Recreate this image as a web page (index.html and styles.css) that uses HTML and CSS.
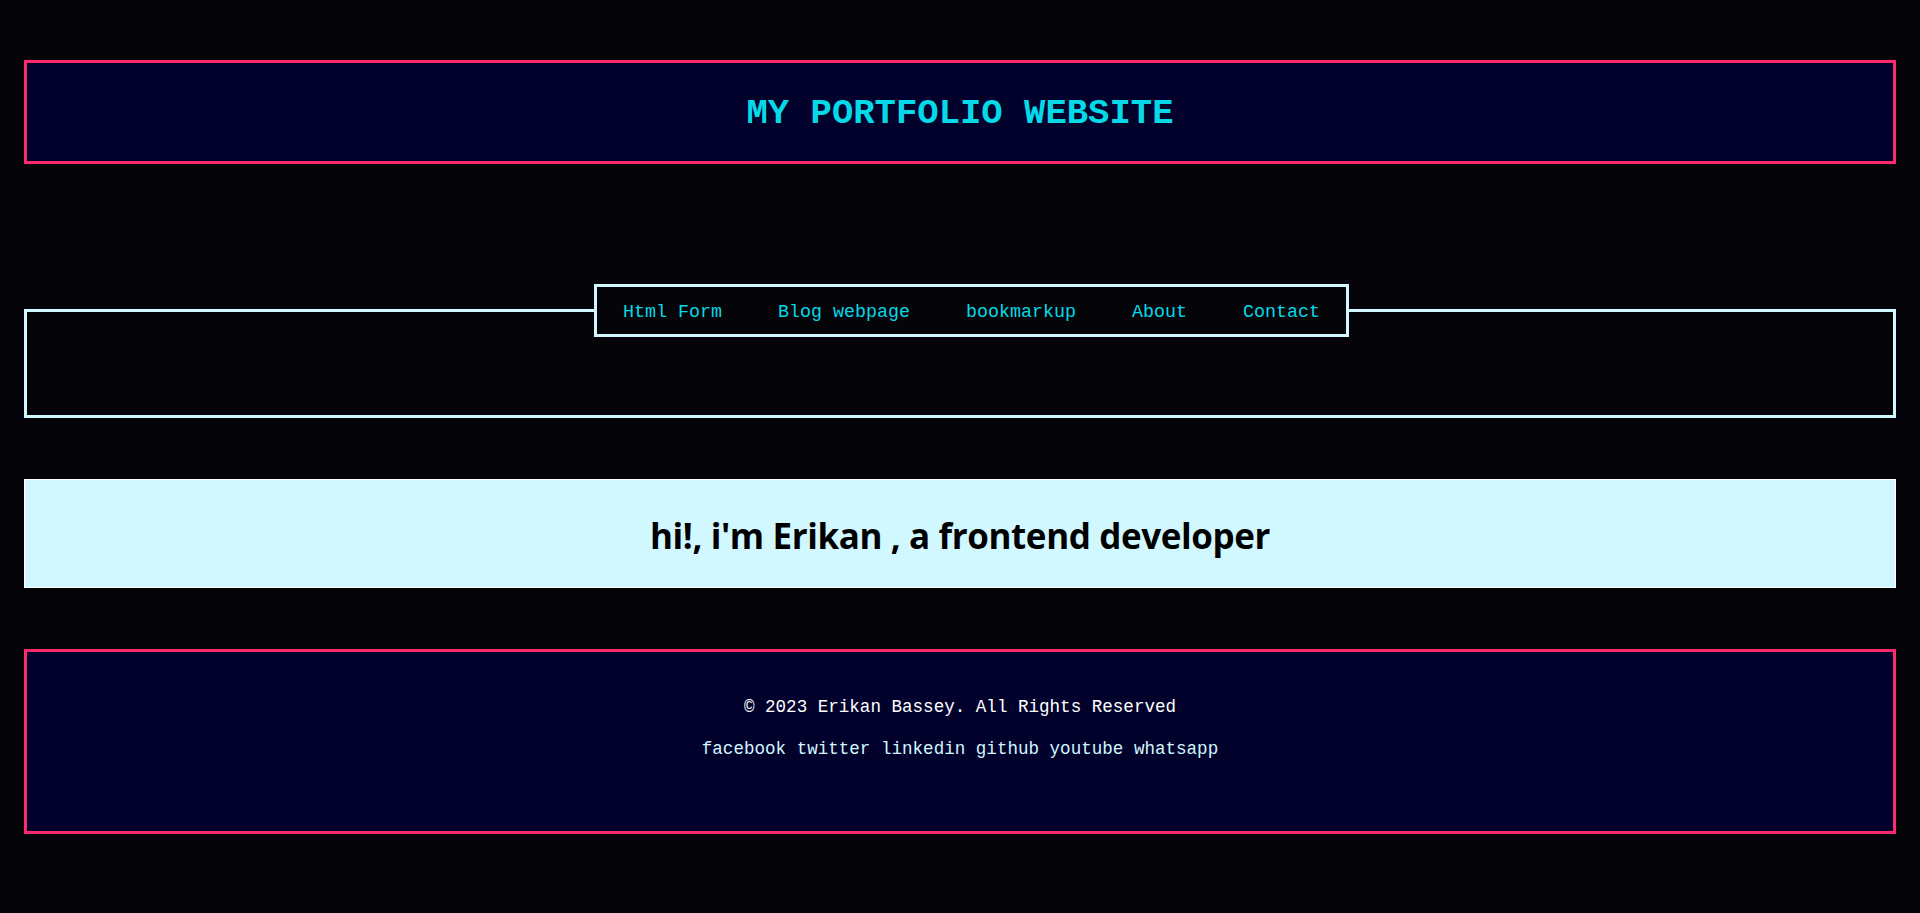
FILE: index.html
```html
<!DOCTYPE html>
<html lang="en">
<head>
<meta charset="utf-8">
<title>My Portfolio Website</title>
<link rel="stylesheet" href="styles.css">
</head>
<body>
<div class="page">
  <header class="site-header">
    <h1 class="site-title">MY PORTFOLIO WEBSITE</h1>
  </header>

  <fieldset class="nav-frame">
    <legend class="nav-legend">
      <ul class="nav-list">
        <li><a href="#" class="nav-link">Html Form</a></li>
        <li><a href="#" class="nav-link">Blog webpage</a></li>
        <li><a href="#" class="nav-link">bookmarkup</a></li>
        <li><a href="#" class="nav-link">About</a></li>
        <li><a href="#" class="nav-link">Contact</a></li>
      </ul>
    </legend>
  </fieldset>

  <section class="hero">
    <h2 class="hero-text">hi!, i'm Erikan , a frontend developer</h2>
  </section>

  <footer class="site-footer">
    <p class="copyright">&copy; 2023 Erikan Bassey. All Rights Reserved</p>
    <p class="socials">facebook twitter linkedin github youtube whatsapp</p>
  </footer>
</div>
</body>
</html>
```

FILE: styles.css
```css
html {
  background: #050409;
}

body {
  margin: 0;
  background: #050409;
  font-family: "Liberation Mono", "DejaVu Sans Mono", monospace;
}

.page {
  padding: 60px 24px 0;
  display: flex;
  flex-direction: column;
}

.site-header {
  border: 3px solid #ff2a6d;
  background: #01012b;
  padding: 4px 0 0;
  box-sizing: border-box;
  height: 104px;
}

.site-title {
  margin: 0;
  text-align: center;
  font-family: "Liberation Mono", "DejaVu Sans Mono", monospace;
  font-weight: 700;
  font-size: 35.6px;
  line-height: 94px;
  color: #05d9e8;
}

.nav-frame {
  margin: 120px 0 0;
  padding: 0 0 78px 23px;
  border: 3px solid #d1f7ff;
  min-width: 0;
}

.nav-legend {
  margin: 0 auto;
  padding: 0;
  border: 3px solid #d1f7ff;
  background: #050409;
}

.nav-list {
  list-style: none;
  margin: 0;
  padding: 14px 26px 10px;
  display: flex;
  gap: 56px;
}

.nav-link {
  display: block;
  font-family: "Liberation Mono", "DejaVu Sans Mono", monospace;
  font-size: 18.33px;
  line-height: 23px;
  color: #05d9e8;
  text-decoration: none;
  white-space: nowrap;
}

.hero {
  margin-top: 61px;
  height: 109px;
  box-sizing: border-box;
  border: 1px solid #ffffff;
  padding-top: 5px;
  background: #d1f7ff;
  display: flex;
  align-items: center;
  justify-content: center;
}

.hero-text {
  margin: 0;
  font-family: "Open Sans", "Noto Sans", sans-serif;
  font-weight: 700;
  font-size: 35px;
  line-height: 42px;
  color: #000000;
  letter-spacing: -0.4px;
  white-space: nowrap;
}

.site-footer {
  margin-top: 61px;
  border: 3px solid #ff2a6d;
  background: #01012b;
  padding: 44px 0 71px;
  display: flex;
  flex-direction: column;
  align-items: center;
  gap: 20px;
}

.copyright,
.socials {
  margin: 0;
  font-family: "Liberation Mono", "DejaVu Sans Mono", monospace;
  font-size: 17.57px;
  line-height: 22px;
  text-align: center;
  white-space: nowrap;
}

.copyright {
  color: #ffffff;
}

.socials {
  color: #d1f7ff;
}
```
